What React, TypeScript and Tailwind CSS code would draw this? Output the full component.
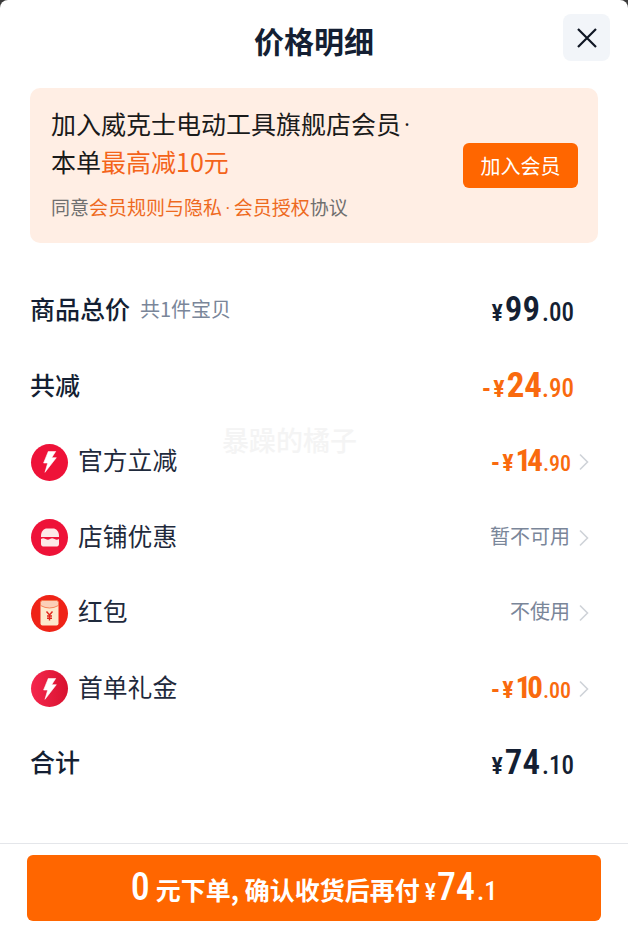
import React from "react";

const cjk = "font-['Noto_Sans_CJK_SC','Noto_Sans',sans-serif]";
const num = "font-['Roboto','Noto_Sans_CJK_SC',sans-serif] font-stretch-condensed";

function Chevron() {
  return (
    <svg width="12" height="20" viewBox="0 0 12 20" fill="none" className="ml-[8px] shrink-0">
      <path d="M2 2.5 L9.5 10 L2 17.5" stroke="#cfd3d8" strokeWidth="1.6" />
    </svg>
  );
}

function Bolt({ gradient }: { gradient?: boolean }) {
  return (
    <div className={`w-[37px] h-[37px] rounded-full flex items-center justify-center ${gradient ? "bg-gradient-to-r from-[#f5264d] to-[#d8112f]" : "bg-[#ee1238]"}`}>
      <svg width="14" height="22" viewBox="0 0 14 22" fill="#ffffff">
        <path d="M5.3 0.4 H12.7 L8.7 6.7 H13.3 L2 21.3 L4.7 12 H0.6 Z" strokeLinejoin="round" stroke="#ffffff" strokeWidth="0.6" />
      </svg>
    </div>
  );
}

function Shop() {
  return (
    <div className="w-[37px] h-[37px] rounded-full bg-[#ee1238] flex items-center justify-center">
      <svg width="20" height="19" viewBox="0 0 20 19" fill="#fde8e8">
        <path d="M1 8 C1 3 4 0.5 7 0.5 H13 C16 0.5 19 3 19 8 V9 H1 Z" />
        <path d="M1 11 C2.5 9.9 3.5 9.9 5.5 11 C7.5 12.1 8.5 12.1 10 11 C11.5 9.9 12.5 9.9 14.5 11 C16.5 12.1 17.5 11.9 19 11 V16 C19 17.5 18 18.5 17 18.5 H3 C2 18.5 1 17.5 1 16 Z" />
      </svg>
    </div>
  );
}

function Packet() {
  return (
    <div className="w-[37px] h-[37px] rounded-full bg-[#ef2317] flex items-center justify-center">
      <svg width="19" height="26" viewBox="0 0 19 26">
        <rect x="0.5" y="0.5" width="18" height="25" rx="2" fill="#fde9cc" />
        <path d="M0.5 2.5 a2 2 0 0 1 2-2 h14 a2 2 0 0 1 2 2 v3 q-9 5 -18 0 z" fill="#fbd0b8" stroke="#f4602f" strokeWidth="0.7" />
        <path d="M6.5 11.5 L9.5 15 L12.5 11.5 M9.5 15 V20.5 M7 16 H12 M7 18.3 H12" stroke="#e0261c" strokeWidth="1.4" fill="none" />
      </svg>
    </div>
  );
}

function Price({ minus, big, small, orange, narrow, size = 35, smallSize = 25 }: { minus?: boolean; big: string; small: string; orange?: boolean; narrow?: boolean; size?: number; smallSize?: number }) {
  return (
    <div className={`${num} ${orange ? "font-bold text-[#f96a0e]" : "font-semibold text-[#141f33]"} flex items-baseline leading-none pb-[3px] ${narrow ? "mr-[-1px]" : ""}`}>
      {minus && <span className="text-[26px] mr-[2px]">-</span>}
      <span className="text-[24px] mr-[2px]">¥</span>
      <span style={{ fontSize: size }} className={narrow ? "tracking-[-4px] mr-[4px]" : ""}>{big}</span>
      <span style={{ fontSize: smallSize }} className={`font-medium ${orange ? "" : "ml-[2px]"}`}>{small}</span>
    </div>
  );
}

function Row({ children }: { children: React.ReactNode }) {
  return <div className="h-[75.5px] flex items-center justify-between">{children}</div>;
}

const labelBold = "text-[25px] font-medium text-[#141f33] leading-none pb-[5px] ml-[-1px]";
const labelNormal = "text-[24.8px] text-[#1f2a3c] leading-none pb-[5px]";
const muted = "text-[20px] text-[#7a8699] leading-none pb-[4px]";

export default function App() {
  return (
    <div className={`${cjk} relative w-[628px] h-[947px] bg-[#3a3a3a] overflow-hidden`}>
      <div className="relative w-full h-full bg-white rounded-t-[8px] flex flex-col">
        <header className="relative h-[88px] flex items-center justify-center pb-[8px]">
          <h1 className="text-[30px] font-bold text-[#141f33] leading-none">价格明细</h1>
          <button className="absolute right-[18px] top-[14px] w-[47px] h-[47px] rounded-[8px] bg-[#f2f5f9] flex items-center justify-center">
            <svg width="22" height="22" viewBox="0 0 22 22" fill="none">
              <path d="M2 2 L20 20 M20 2 L2 20" stroke="#0f1623" strokeWidth="2.2" />
            </svg>
          </button>
        </header>

        <section className="mx-[30px] h-[155px] rounded-[10px] bg-[#ffeee4] pl-[21px] pr-[20px] flex items-center justify-between">
          <div className="mt-[-9px]">
            <div className="text-[25px] leading-[38px] text-[#1a1a1a]">
              <div>加入威克士电动工具旗舰店会员<span className={`${num} ml-[3px] leading-none`}>·</span></div>
              <div>本单<span className="text-[#f4641a]">最高减10元</span></div>
            </div>
            <div className="text-[19px] leading-none text-[#6f6f6f] mt-[17px]">
              同意<span className="text-[#ee6a1f]">会员规则与隐私<span className={`${num} mx-[3.5px] leading-none`}>·</span>会员授权</span>协议
            </div>
          </div>
          <button className="w-[115px] h-[45px] rounded-[6px] bg-[#ff6600] text-white text-[20px] leading-none">加入会员</button>
        </section>

        <main className="mt-[30.5px] pl-[31px] pr-[38px]">
          <Row>
            <div className="flex items-center gap-[10px]">
              <span className={labelBold}>商品总价</span>
              <span className={muted}>共1件宝贝</span>
            </div>
            <div className="mr-[16px]"><Price big="99" small=".00" /></div>
          </Row>
          <Row>
            <span className={labelBold}>共减</span>
            <div className="mr-[16px]"><Price minus big="24" small=".90" orange /></div>
          </Row>
          <Row>
            <div className="flex items-center gap-[10px]"><Bolt /><span className={labelNormal}>官方立减</span></div>
            <div className="flex items-center"><Price minus narrow big="14" small=".90" orange size={31} smallSize={22} /><Chevron /></div>
          </Row>
          <Row>
            <div className="flex items-center gap-[10px]"><Shop /><span className={labelNormal}>店铺优惠</span></div>
            <div className="flex items-center"><span className={muted}>暂不可用</span><Chevron /></div>
          </Row>
          <Row>
            <div className="flex items-center gap-[10px]"><Packet /><span className={labelNormal}>红包</span></div>
            <div className="flex items-center"><span className={muted}>不使用</span><Chevron /></div>
          </Row>
          <Row>
            <div className="flex items-center gap-[10px]"><Bolt gradient /><span className={labelNormal}>首单礼金</span></div>
            <div className="flex items-center"><Price minus narrow big="10" small=".00" orange size={31} smallSize={22} /><Chevron /></div>
          </Row>
          <Row>
            <span className={labelBold}>合计</span>
            <div className="mr-[16px]"><Price big="74" small=".10" /></div>
          </Row>
        </main>

        <footer className="mt-auto h-[104px] border-t border-[#e4e6ea] pt-[11px] px-[27px]">
          <button className="w-full h-[66px] rounded-[6px] bg-[#ff6600] text-white font-bold flex items-baseline justify-center pt-[13px]">
            <span className={`${num} text-[38px] leading-none font-medium`}>0</span>
            <span className="text-[25px] leading-none ml-[6px]">元下单, 确认收货后再付</span>
            <span className={`${num} text-[24px] leading-none ml-[5px] font-medium`}>¥</span>
            <span className={`${num} text-[38px] leading-none font-medium ml-[1px]`}>74</span>
            <span className={`${num} text-[26px] leading-none font-medium ml-[2px]`}>.1</span>
          </button>
        </footer>

        <div className="absolute left-[222px] top-[426px] text-[27px] leading-none font-medium text-[#f4f4f4] pointer-events-none">暴躁的橘子</div>
      </div>
    </div>
  );
}
